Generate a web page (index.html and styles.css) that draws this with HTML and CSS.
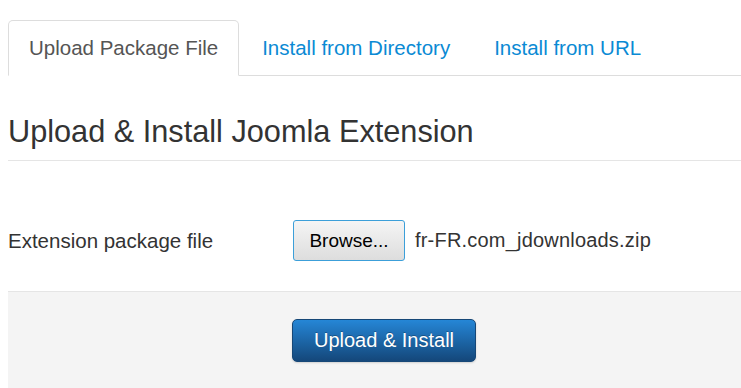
FILE: index.html
```html
<!DOCTYPE html>
<html lang="en">
<head>
    <meta charset="UTF-8">
    <meta name="viewport" content="width=device-width, initial-scale=1.0">
    <title>Extensions: Install</title>
    <link rel="stylesheet" href="styles.css">
</head>
<body>

<div id="installer">
    <ul class="nav-tabs">
        <li class="active"><a href="#package">Upload Package File</a></li>
        <li><a href="#directory">Install from Directory</a></li>
        <li><a href="#url">Install from URL</a></li>
    </ul>

    <div class="tab-pane">
        <h2 class="page-title">Upload &amp; Install Joomla Extension</h2>

        <div class="control-group">
            <label class="control-label" for="install_package">Extension package file</label>
            <div class="controls">
                <button type="button" id="install_package" class="browse">Browse...</button>
                <span class="file-name">fr-FR.com_jdownloads.zip</span>
            </div>
        </div>

        <div class="form-actions">
            <button type="button" class="btn-primary">Upload &amp; Install</button>
        </div>
    </div>
</div>

</body>
</html>
```

FILE: styles.css
```css
body {
    font-family: "Liberation Sans", Arial, sans-serif;
    font-size: 20.5px;
    color: #333;
    background-color: #fff;
    margin: 0;
    overflow: hidden;
}
#installer {
    padding: 20px 0 0 8px;
}
.nav-tabs {
    display: flex;
    list-style: none;
    margin: 0;
    padding: 0;
    border-bottom: 1px solid #ddd;
}
.nav-tabs li {
    margin-right: 2px;
    margin-bottom: -1px;
}
.nav-tabs a {
    display: block;
    padding: 15px 20px;
    line-height: 24px;
    color: #0a8ad4;
    text-decoration: none;
    border: 1px solid transparent;
    border-radius: 5px 5px 0 0;
}
.nav-tabs .active a {
    color: #555;
    background-color: #fff;
    border-color: #ddd #ddd transparent;
}
.page-title {
    font-size: 30.7px;
    font-weight: normal;
    line-height: 40px;
    color: #333;
    margin: 36px 0 0;
    padding-bottom: 8px;
    border-bottom: 1px solid #e5e5e5;
}
.control-group {
    display: grid;
    grid-template-columns: 285px 1fr;
    align-items: center;
    margin-top: 59px;
    margin-bottom: 30px;
}
.control-label {
    color: #333;
}
.controls {
    display: flex;
    align-items: center;
}
.browse {
    font-family: "Liberation Sans", Arial, sans-serif;
    font-size: 19px;
    color: #000;
    width: 112px;
    height: 41px;
    padding: 0;
    border: 1px solid #3c9fd9;
    border-radius: 3px;
    background: linear-gradient(#f5f5f5, #dddddd);
}
.file-name {
    margin-left: 10px;
    font-size: 20px;
    letter-spacing: 0.2px;
    color: #333;
}
.form-actions {
    background-color: #f4f4f4;
    border-top: 1px solid #e5e5e5;
    padding: 27px 0 40px 284px;
}
.btn-primary {
    font-family: "Liberation Sans", Arial, sans-serif;
    font-size: 20px;
    color: #fff;
    width: 184px;
    height: 43px;
    border: 1px solid #164777;
    border-radius: 5px;
    background: linear-gradient(#2586d6, #14477a);
    box-shadow: 0 1px 2px rgba(0, 0, 0, 0.15);
    text-shadow: 0 -1px 0 rgba(0, 0, 0, 0.25);
}
```
